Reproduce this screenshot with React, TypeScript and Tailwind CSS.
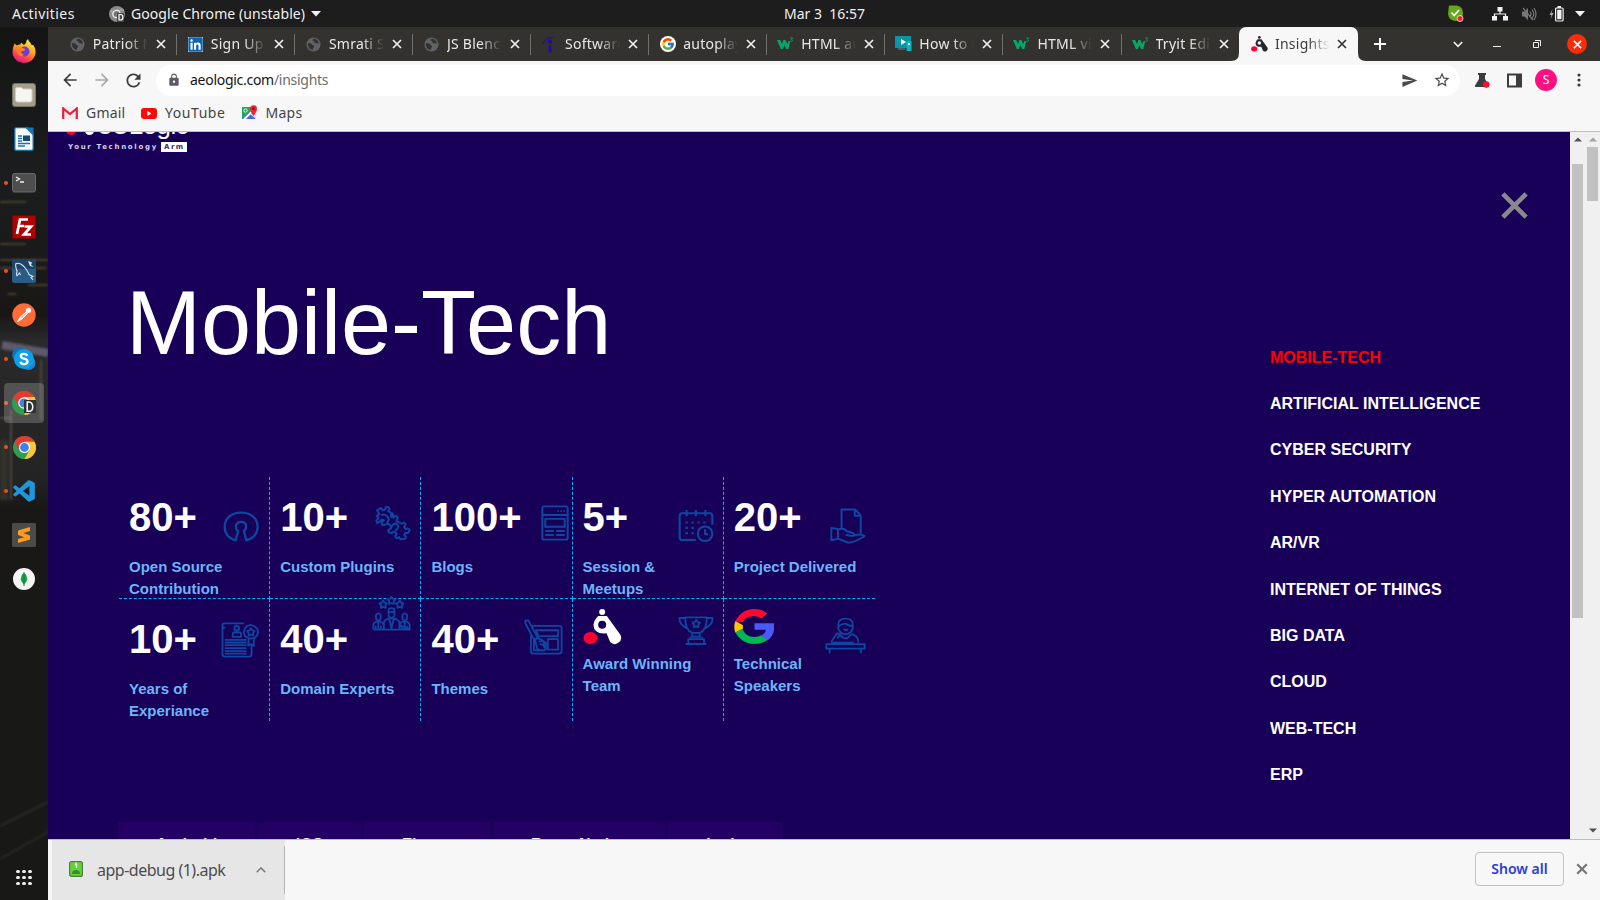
import type { ReactNode } from "react";
import { FcGoogle } from "react-icons/fc";
import { FaLinkedin } from "react-icons/fa";
import { BiLogoVisualStudio } from "react-icons/bi";
import { MdLock, MdRefresh, MdStarBorder, MdArrowBack, MdArrowForward, MdSend } from "react-icons/md";

const UI = "font-['Noto_Sans',sans-serif]";
const ARIAL = "font-['Liberation_Sans',Arial,sans-serif]";

/* ---------- shared glyphs ---------- */

function Cross({ size, color, width }: { size: number; color: string; width: number }) {
  return (
    <svg width={size} height={size} viewBox="0 0 10 10" className="shrink-0">
      <path d="M1 1L9 9M9 1L1 9" stroke={color} strokeWidth={width} />
    </svg>
  );
}

function Caret({ className }: { className?: string }) {
  return (
    <svg width="10" height="6" viewBox="0 0 10 6" className={className}>
      <path d="M0 0h10L5 5.5z" fill="#f2f2f2" />
    </svg>
  );
}

function Chrome({ size = 24 }: { size?: number }) {
  return (
    <svg width={size} height={size} viewBox="0 0 24 24">
      <circle cx="12" cy="12" r="12" fill="#2f9e4f" />
      <path d="M1.6 6A12 12 0 0 1 22.4 6L12 6L6.8 15Z" fill="#e33b2e" />
      <path d="M22.4 6A12 12 0 0 1 12 24L17.2 15L12 6Z" fill="#fcc934" />
      <circle cx="12" cy="12" r="5.8" fill="#fff" />
      <circle cx="12" cy="12" r="4.6" fill="#3f7ff0" />
    </svg>
  );
}

function Globe() {
  return (
    <svg width="15" height="15" viewBox="0 0 16 16">
      <circle cx="8" cy="8" r="7.5" fill="#5f6368" />
      <path d="M2 6.500c2 .2 4 .3 4.500 1.500.5 1 2 .8 2.200 2-.2 1.500-1.500 1.500-1.700 4-2.500-.4-5.300-3-5-7.500zM8 1.800c-1 1-1.500 2 0 2.500 1.200.4.600 1.700 2 2 1.500.3 2 1 3.800.6C13.500 4 11.500 1.700 8 1.800z" fill="#33322f" />
    </svg>
  );
}

function W3() {
  return (
    <svg width="17" height="14" viewBox="0 0 17 14">
      <path d="M0 3h3.200l1.800 4L6.400 3h2l1.900 4 1-2.700h2L11.300 12H9.300L7.300 8.300 5.800 12H3.900z" fill="#06a767" />
      <path d="M13.300 1h2.200l-1 1.500c1.300.1 1.200 1.900-.2 1.900l-1-.2" fill="none" stroke="#06a767" strokeWidth=".9" />
    </svg>
  );
}

function AeoMark({ width, height, color }: { width: number; height: number; color: string }) {
  return (
    <svg width={width} height={height} viewBox="252 416 116 108">
      <circle cx="309" cy="425" r="9" fill={color} />
      <path d="M297 437H323L364 494A19 19 0 0 1 333 515L322 489Q284 493 283 463Q284 450 297 437Z" fill={color} />
      <circle cx="309" cy="463" r="12" fill={color === "#fff" ? "#180058" : "#f7f7f7"} />
      <ellipse cx="274" cy="503" rx="21" ry="18" fill="#ff0032" />
    </svg>
  );
}

/* ---------- desktop top bar ---------- */

function TopBar() {
  return (
    <header className={`grid h-[27px] shrink-0 grid-cols-[784px_1fr] items-center bg-[#1d1d1d] text-[14px] leading-[27px] text-[#f0f0f0] ${UI}`}>
      <div className="flex items-center pl-3">
        <span className="w-[97px] tracking-[0.45px]">Activities</span>
        <svg width="16" height="16" viewBox="0 0 16 16">
          <circle cx="8" cy="8" r="8" fill="#8a8a8a" />
          <path d="M8 4h7M5 9L1.500 4" stroke="#b5b5b5" />
          <circle cx="7.500" cy="8" r="3.700" fill="#777" stroke="#eee" strokeWidth="1.300" />
          <path d="M8 7h7v9H8z" fill="#444" />
          <path d="M10 8.500v5.500h1.500c3.200 0 3.200-5.500 0-5.500z" fill="none" stroke="#fff" strokeWidth="1.200" />
        </svg>
        <span className="ml-[6px] w-[174px] whitespace-nowrap tracking-[0.07px]">Google Chrome (unstable)</span>
        <Caret className="ml-[6px]" />
      </div>
      <div className="flex items-center">
        <span className="-mt-px whitespace-pre">Mar 3  16:57</span>
        <div className="ml-auto flex items-center pr-[15px]">
          <svg width="17" height="17" viewBox="0 0 17 17" className="mr-[28px]">
            <path d="M2 .5h8q6 1 6 8 0 7-7 7.500-7 0-8-7z" fill="#65a61a" />
            <path d="M4.500 7.500l2.700 3L12 5" fill="none" stroke="#fff" strokeWidth="1.800" />
            <circle cx="13" cy="13.500" r="3" fill="#ee2233" stroke="#eee" strokeWidth=".8" />
          </svg>
          <svg width="16" height="14" viewBox="0 0 16 14" className="mr-[13px]">
            <path d="M5.500 0h5v4.500h-5zM0 9h5v4.500H0zM11 9h5v4.500h-5z" fill="#f2f2f2" />
            <path d="M8 4v3M2.500 9.500V7h11v2.500" fill="none" stroke="#f2f2f2" strokeWidth="1.200" />
          </svg>
          <svg width="16" height="14" viewBox="0 0 16 14" className="mr-[12px]">
            <path d="M1 4.500h2.500L7 1v12L3.500 9.500H1z" fill="#777" />
            <path d="M9 4.500q2 2.500 0 5M11 2.500q3.500 4.500 0 9M13 1q4 6 0 12M2 1l10 12" fill="none" stroke="#777" strokeWidth="1.200" />
          </svg>
          <svg width="15" height="16" viewBox="0 0 15 16" className="mr-[11px]">
            <path d="M3.500 3L.5 9h2L1.500 13l3-6h-2z" fill="#aaa" />
            <rect x="6.600" y="2" width="7.500" height="13" rx="1" fill="none" stroke="#f2f2f2" strokeWidth="1.200" />
            <path d="M8.200 3.700h4.300v9.600H8.200zM8.500 0h3.500v2H8.500z" fill="#f2f2f2" />
          </svg>
          <Caret />
        </div>
      </div>
    </header>
  );
}

/* ---------- dock ---------- */

type DockApp = { name: string; running?: boolean; active?: boolean; icon: ReactNode };

const dockApps: DockApp[] = [
  {
    name: "firefox",
    icon: (
      <svg width="24" height="24" viewBox="0 0 24 24">
        <defs>
          <linearGradient id="ff" gradientUnits="userSpaceOnUse" x1="19" y1="1" x2="8" y2="24">
            <stop offset="0" stopColor="#fff04a" />
            <stop offset=".45" stopColor="#ffa01f" />
            <stop offset=".75" stopColor="#ff4050" />
            <stop offset="1" stopColor="#e21587" />
          </linearGradient>
        </defs>
        <path d="M2.500 4.500L5 6.500Q6.500 5 8.500 5.500L9 3.500 12 6 14 4Q14 1.500 16 0 16.500 2.500 18.500 4L20 6.500 21 5.500Q25 11 23 16.500 20 24 12 24 3.500 23.500.8 16 0 10 2.500 4.500Z" fill="url(#ff)" />
        <circle cx="12.500" cy="12.500" r="5" fill="#6a3fd8" />
        <path d="M4 8Q8 7 11.500 9.500 14 10 12.500 11.500L9 12.500Q9 15 12 15.500 9 19 5.500 14.500Z" fill="#ff8420" />
      </svg>
    ),
  },
  {
    name: "files",
    icon: (
      <svg width="24" height="24" viewBox="0 0 24 24">
        <rect x=".5" y=".5" width="23" height="23" rx="2.500" fill="#a49d8b" stroke="#777164" />
        <path d="M3.500 6q0-1.500 1.500-1.500h4.500L11 6h7.500Q20 6 20 7.500V17q0 2-2 2H6q-2.500 0-2.500-2z" fill="#f7f5f2" stroke="#d4cec2" />
      </svg>
    ),
  },
  {
    name: "writer",
    icon: (
      <svg width="20" height="24" viewBox="0 0 20 24">
        <path d="M2 .7h11.500l5.700 6V22q0 1.300-1.300 1.300H2Q.8 23.300.8 22V2Q.8.7 2 .7z" fill="#fafafa" stroke="#0f6ba8" strokeWidth="1.300" />
        <path d="M11 .5h8.500V9z" fill="#1677b5" />
        <path d="M4 9h4M4 11.500h4M4 14h4M4 16.500h12M4 19h7" stroke="#1677b5" strokeWidth="1.300" />
        <path d="M9 8.500h7V14H9z" fill="#134b73" />
      </svg>
    ),
  },
  {
    name: "terminal",
    running: true,
    icon: (
      <svg width="24" height="20" viewBox="0 0 24 20">
        <rect x=".5" y=".5" width="23" height="18.500" rx="2" fill="#4e4e4e" stroke="#6a6a6a" />
        <path d="M4 4l3.500 2L4 8M8 9h4" fill="none" stroke="#f2f2f2" strokeWidth="1.300" />
      </svg>
    ),
  },
  {
    name: "filezilla",
    icon: (
      <svg width="24" height="24" viewBox="0 0 24 24">
        <rect x=".5" y=".5" width="23" height="23" fill="#b00000" stroke="#7c0000" strokeDasharray="1 1" />
        <path d="M5 19L8 4.500h8M6.500 11H12M12.500 11.500h6.500l-7 8h7" fill="none" stroke="#fff" strokeWidth="2.700" />
      </svg>
    ),
  },
  {
    name: "mysql",
    running: true,
    icon: (
      <svg width="24" height="24" viewBox="0 0 24 24">
        <rect width="24" height="24" rx="2.500" fill="#2a5d86" />
        <rect width="24" height="10" rx="2.500" fill="#1d4568" />
        <path d="M5 17q-1-2 0-5-2-5-1-7.500 4-1 8 3 4 5 5 8l4 2-2 1 2 2.500M5 17l2.500-3 1 2" fill="none" stroke="#dbe6ef" strokeWidth="1.100" />
        <path d="M16 2l4 1.500-1 2.500 3 2-4-1z" fill="#dbe6ef" />
      </svg>
    ),
  },
  {
    name: "postman",
    icon: (
      <svg width="24" height="24" viewBox="0 0 24 24">
        <circle cx="12" cy="12" r="11.700" fill="#ff6c37" />
        <path d="M5.500 18.500l2.500-4 6-5.500 1.500 1.500-5.500 5.500z" fill="#fff" stroke="#fff" strokeLinejoin="round" />
        <circle cx="16.500" cy="7.300" r="2.600" fill="#fff" />
        <path d="M9.500 15l5-5" stroke="#ff6c37" strokeWidth=".8" />
      </svg>
    ),
  },
  {
    name: "skype",
    running: true,
    icon: (
      <svg width="24" height="24" viewBox="0 0 24 24">
        <circle cx="7.500" cy="8" r="7.300" fill="#0a75c2" />
        <circle cx="16.500" cy="16" r="7" fill="#1b86d6" />
        <circle cx="12" cy="12" r="10" fill="#0f9fe5" />
        <path d="M15.300 8.800Q14.500 6.800 12 6.800q-3.200 0-3.200 2.300 0 2 3.200 2.600 3.500.6 3.500 2.900 0 2.600-3.500 2.600-3 0-3.600-2.300" fill="none" stroke="#fff" strokeWidth="2.300" />
      </svg>
    ),
  },
  {
    name: "chrome-dev",
    running: true,
    active: true,
    icon: (
      <svg width="24" height="24" viewBox="0 0 24 24" className="overflow-visible">
        <Chrome />
        <path d="M12 9h12v13H12z" fill="#333" />
        <path d="M15.200 11v9.300h1.800c5 0 5-9.300 0-9.300z" fill="none" stroke="#fff" strokeWidth="1.500" />
      </svg>
    ),
  },
  { name: "chrome", running: true, icon: <Chrome size={23} /> },
  { name: "vscode", running: true, icon: <BiLogoVisualStudio size={26} color="#2196dc" /> },
  {
    name: "sublime",
    icon: (
      <svg width="24" height="24" viewBox="0 0 24 24">
        <rect width="24" height="24" rx="1.500" fill="#4b4b4b" />
        <path d="M6 7.500L18 4v4L6 11.500zM6 8l12 4.500v4L6 12zM6 16l12-3.500v4L6 20z" fill="#ff9a1c" />
      </svg>
    ),
  },
  {
    name: "mongodb",
    icon: (
      <svg width="22" height="22" viewBox="0 0 22 22">
        <circle cx="11" cy="11" r="11" fill="#f4f4f4" />
        <path d="M11 4q6.500 7 0 12.500Q4.500 11 11 4z" fill="#16a34c" />
        <path d="M11 6v12" stroke="#0d7a37" />
      </svg>
    ),
  },
];

function Dock() {
  return (
    <aside className="relative flex w-[48px] shrink-0 flex-col bg-[#171717] pt-[2px]">
      <svg className="absolute left-0 top-0" width="48" height="873" viewBox="0 27 48 873">
        <defs>
          <linearGradient id="wall" x1="0" y1="0" x2="0" y2="1">
            <stop offset="0" stopColor="#141414" />
            <stop offset=".17" stopColor="#1b1d1e" />
            <stop offset=".33" stopColor="#191716" />
            <stop offset=".36" stopColor="#2a2a2b" />
            <stop offset=".52" stopColor="#242324" />
            <stop offset=".55" stopColor="#191817" />
            <stop offset="1" stopColor="#181817" />
          </linearGradient>
          <filter id="soft"><feGaussianBlur stdDeviation="1" /></filter>
        </defs>
        <rect y="27" width="48" height="873" fill="url(#wall)" />
        <g filter="url(#soft)" fill="none">
          <path d="M0 202h26M0 244h26M0 260h48M0 268h46M28 285h20M8 294h8" stroke="#5a4c36" strokeWidth="1.300" />
          <path d="M2 345L48 353" stroke="#5d5a6a" strokeWidth="8" />
          <path d="M11 410v90M41 360v60M0 418h10" stroke="#4a4540" strokeWidth="2" />
          <path d="M0 440h8v60H0z" fill="#33302a" />
          <path d="M0 826L48 802M0 859L48 832" stroke="#2c2b27" strokeWidth="2" />
        </g>
      </svg>
      {dockApps.map((app) => (
        <div key={app.name} className="relative flex h-[44px] shrink-0 items-center">
          <span className={`ml-[4px] h-1 w-[3.500px] rounded-full ${app.running ? "bg-[#e9521d]" : ""}`} />
          <div className={`-ml-[3.500px] flex h-[40px] w-[40px] items-center justify-center rounded-[4px] ${app.active ? "bg-white/20" : ""}`}>
            {app.icon}
          </div>
        </div>
      ))}
      <div className="relative mt-auto mb-[15px] ml-4 grid w-4 grid-cols-3 gap-[2.500px]">
        {Array.from({ length: 9 }, (_, i) => (
          <span key={i} className="size-[3.500px] rounded-full bg-[#ededed]" />
        ))}
      </div>
    </aside>
  );
}

/* ---------- browser chrome ---------- */

const tabs: { title: string; icon: ReactNode }[] = [
  { title: "Patriot M", icon: <Globe /> },
  { title: "Sign Up", icon: <span className="flex bg-white"><FaLinkedin size={15} color="#0a66b5" className="scale-110" /></span> },
  { title: "Smrati Sr", icon: <Globe /> },
  { title: "JS Blenc", icon: <Globe /> },
  {
    title: "Software",
    icon: (
      <svg width="16" height="17" viewBox="0 0 16 17">
        <path d="M1 8Q3 1 11 1.500" fill="none" stroke="#2209a8" strokeWidth="1" />
        <circle cx="8" cy="5.500" r="2.200" fill="#2209a8" />
        <path d="M6.600 9h2.800v7.500H6.600z" fill="#2209a8" />
      </svg>
    ),
  },
  { title: "autoplay", icon: <span className="flex size-4 items-center justify-center rounded-full bg-white"><FcGoogle size={14} /></span> },
  { title: "HTML au", icon: <W3 /> },
  {
    title: "How to m",
    icon: (
      <svg width="17" height="16" viewBox="0 0 17 16">
        <path d="M0 0h16v12H0z" fill="#0796a6" />
        <path d="M6 3l5 3-5 3z" fill="#fff" />
        <path d="M11.500 5h5v10h-5z" fill="#07b7c7" />
        <path d="M13 7h2v2h-2z" fill="#fff" />
        <path d="M3 12h7v2H3z" fill="#45606a" />
      </svg>
    ),
  },
  { title: "HTML vi", icon: <W3 /> },
  { title: "Tryit Edit", icon: <W3 /> },
];

const FADE = "[mask-image:linear-gradient(to_right,#000_60%,transparent_98%)]";

function TabStrip() {
  return (
    <div className={`flex h-[34px] shrink-0 items-stretch bg-[#33322f] pl-[10.700px] text-[14px] tracking-[0.25px] ${UI}`}>
      {tabs.map((tab, i) => (
        <div key={i} className="flex w-[118.100px] shrink-0 items-center">
          <span className="ml-[10px] flex w-[17px] shrink-0 justify-center">{tab.icon}</span>
          <span className={`-mt-[2px] ml-[7px] w-[56px] overflow-hidden whitespace-nowrap text-[#e8e8e8] ${FADE}`}>{tab.title}</span>
          <span className="ml-[7px] flex"><Cross size={10} color="#f0f0f0" width={1.7} /></span>
          <span className={`ml-auto h-[21px] w-px ${i < 9 ? "bg-[#72716f]" : ""}`} />
        </div>
      ))}
      <div className="relative -ml-[0.700px] flex w-[119px] shrink-0 items-center rounded-t-[7px] bg-[#f7f7f7]">
        <svg className="absolute -left-[8px] bottom-0" width="8" height="8"><path d="M8 0v8H0Q8 8 8 0z" fill="#f7f7f7" /></svg>
        <svg className="absolute -right-[8px] bottom-0" width="8" height="8"><path d="M0 0v8h8Q0 8 0 0z" fill="#f7f7f7" /></svg>
        <span className="ml-[12px] flex w-[17px]"><AeoMark width={17} height={16} color="#26242c" /></span>
        <span className={`-mt-[2px] ml-[7px] w-[56px] overflow-hidden whitespace-nowrap text-[#3c3c3c] ${FADE}`}>Insights</span>
        <span className="ml-[6px] flex"><Cross size={10} color="#333" width={1.7} /></span>
      </div>
      <div className="flex grow items-center pl-[16px]">
        <svg width="12" height="12" viewBox="0 0 12 12"><path d="M6 0v12M0 6h12" stroke="#f5f5f5" strokeWidth="2" /></svg>
        <div className="ml-auto flex items-center pr-[13px]">
          <svg width="10" height="7" viewBox="0 0 10 7" className="mr-[30px]"><path d="M.8 1L5 5.300 9.200 1" fill="none" stroke="#f0f0f0" strokeWidth="1.700" /></svg>
          <span className="mr-[32px] mt-[4px] h-px w-[8px] bg-[#f0f0f0]" />
          <svg width="8" height="8" viewBox="0 0 8 8" className="mr-[26px]"><path d="M2 .5h5.500V6M.5 2.500h5v5h-5z" fill="none" stroke="#f0f0f0" /></svg>
          <span className="flex size-5 items-center justify-center rounded-full bg-[#fb2c06]"><Cross size={9} color="#fff" width={1.8} /></span>
        </div>
      </div>
    </div>
  );
}

function Toolbar() {
  return (
    <div className={`flex h-[38px] shrink-0 items-center bg-[#f7f7f7] pl-[12px] text-[14px] ${UI}`}>
      <MdArrowBack size={20} color="#3c3c3c" />
      <MdArrowForward size={20} color="#aaa" className="ml-3" />
      <MdRefresh size={21} color="#3c3c3c" className="ml-[11px]" />
      <div className="ml-[12px] flex h-[31px] w-[1304px] shrink-0 items-center rounded-full bg-white pl-[11px] pr-[9px]">
        <MdLock size={14} color="#5a5d66" />
        <span className="-mt-[2px] ml-[9px] tracking-[-0.28px] text-[#6c6c6c]"><span className="text-[#141414]">aeologic.com</span>/insights</span>
        <MdSend size={17} color="#4a4a4a" className="ml-auto" />
        <MdStarBorder size={18} color="#4a4a4a" className="ml-[15px]" />
      </div>
      <svg width="16" height="16" viewBox="0 0 16 16" className="ml-[14px]">
        <path d="M4 1h8v2h-1v4l4 6.500q.5 1.500-1 1.500H2Q.5 15 1 13.500L5 7V3H4z" fill="#3c3c3c" />
        <circle cx="12.300" cy="12.500" r="3.200" fill="#ff1030" />
      </svg>
      <svg width="15" height="15" viewBox="0 0 15 15" className="ml-[17px]"><path d="M1 1.500h13v12H1z" fill="none" stroke="#3c3c3c" strokeWidth="2" /><path d="M9 1h5v13H9z" fill="#3c3c3c" /></svg>
      <span className="ml-[13px] flex size-[22px] items-center justify-center rounded-full bg-[#ff0f80] text-[12px] text-white">S</span>
      <svg width="4" height="14" viewBox="0 0 4 14" className="ml-[20px]"><g fill="#3c3c3c"><circle cx="2" cy="2" r="1.600" /><circle cx="2" cy="7" r="1.600" /><circle cx="2" cy="12" r="1.600" /></g></svg>
    </div>
  );
}

function Bookmarks() {
  return (
    <div className={`flex h-[33px] shrink-0 items-center border-b border-[#bdbdbd] bg-[#f7f7f7] pb-[4px] pl-[14px] text-[14px] text-[#444] ${UI}`}>
      <svg width="16" height="12" viewBox="0 0 16 12"><path d="M0 0h16v12H0z" fill="#eee" /><path d="M1.200 12V1.500L8 7l6.800-5.500V12" fill="none" stroke="#e0233a" strokeWidth="2.200" /></svg>
      <span className="-mt-px ml-2 w-[55px] tracking-[0.2px]">Gmail</span>
      <svg width="16" height="11" viewBox="0 0 16 11"><rect width="16" height="11" rx="3" fill="#ff0808" /><path d="M6.300 3v5l4.200-2.500z" fill="#fff" /></svg>
      <span className="-mt-px ml-2 w-[76px] tracking-[0.55px]">YouTube</span>
      <svg width="17" height="16" viewBox="0 0 17 16">
        <path d="M1 2h13v12H1z" fill="#26a65b" />
        <path d="M1 14L8 7l7 7z" fill="#4668e8" />
        <path d="M2.500 15L13 4.500" stroke="#fff" strokeWidth="2" />
        <path d="M9 9h6v5z" fill="#dfe3e6" />
        <circle cx="4.500" cy="5.500" r="1.700" fill="none" stroke="#e8f5ec" />
        <path d="M12.500 11Q9 6 9 3.700a3.500 3.500 0 0 1 7 0Q16 6 12.500 11z" fill="#ee2536" />
        <circle cx="12.500" cy="3.800" r="1.300" fill="#7b0d1a" />
      </svg>
      <span className="-mt-px ml-[7.500px] tracking-[0.25px]">Maps</span>
    </div>
  );
}

/* ---------- web page ---------- */

function Line({ box, w, h, width = 6, className, children }: { box: string; w: number; h: number; width?: number; className: string; children: ReactNode }) {
  return (
    <svg width={w} height={h} viewBox={box} className={`shrink-0 ${className}`} fill="none" stroke="#0d47a1" strokeWidth={width} strokeLinejoin="round">
      {children}
    </svg>
  );
}

const star = (x: number, y: number, r: number) =>
  Array.from({ length: 10 }, (_, i) => {
    const a = (Math.PI / 5) * i - Math.PI / 2;
    const q = i % 2 ? r * 0.6 : r;
    return `${(x + q * Math.cos(a)).toFixed(1)},${(y + q * Math.sin(a)).toFixed(1)}`;
  }).join(" ");

type Stat = { value?: string; mark?: ReactNode; label: string; icon: ReactNode };

const stats: Stat[] = [
  {
    value: "80+",
    label: "Open Source Contribution",
    icon: (
      <Line box="340 121 109 94" w={36} h={31} className="mt-[18px]" width={7}>
        <path d="M378 210C350 202 345 184 345 168C345 142 367 126 395 126S445 142 445 168C445 184 438 202 411 210L403 182Q410 178 410 168Q410 154 395 154T379 168Q379 178 386 182Z" />
      </Line>
    ),
  },
  {
    value: "10+",
    label: "Custom Plugins",
    icon: (
      <Line box="793 106 109 106" w={36} h={35} className="-mr-px mt-[13px]">
        <path d="M799 119L811 112L817 119Q826 119 825 111Q833 105 837 114L833 122L843 127L841 137Q846 144 852 137Q861 135 862 144L858 151L869 157Q873 162 881 156Q890 162 881 169L886 176Q895 171 898 180L893 188L884 188L882 195Q890 198 884 205L870 207L866 200Q858 208 854 198L859 190L850 184L842 188Q833 188 833 179L842 173L838 162L829 159Q824 166 815 163L813 154L820 149Q811 145 808 153L800 158L797 150L805 142L798 136L806 130Z" />
        <path d="M843 127Q851 130 845 139M841 173Q847 158 858 159Q868 168 860 175L854 182M811 135Q820 128 830 137Q839 147 829 159" />
      </Line>
    ),
  },
  {
    value: "100+",
    label: "Blogs",
    icon: (
      <Line box="121 103 85 109" w={28} h={36} className="-mr-[7px] mt-[12px]">
        <rect x="125" y="107" width="77" height="101" rx="5" />
        <path d="M125 133H202M134 145H193V169H134ZM134 182H160M167 182H193M134 194H160M167 194H193M171 121h4M180 121h4M189 121h4" />
      </Line>
    ),
  },
  {
    value: "5+",
    label: "Session & Meetups",
    icon: (
      <Line box="532 118 109 100" w={36} h={33} className="-mr-px mt-[16px]" width={6.5}>
        <path d="M586 212H545Q537 212 537 204V139Q537 131 545 131H628Q636 131 636 139V166M558 121V140M586 121V140M615 121V140M555 159h7M573 159h7M591 159h7M608 159h7M555 175h7M573 175h7M555 191h7M573 191h7" />
        <circle cx="614" cy="193" r="22" />
        <path d="M614 179V194H623" />
      </Line>
    ),
  },
  {
    value: "20+",
    label: "Project Delivered",
    icon: (
      <Line box="988 115 109 108" w={36} h={36} className="-mr-px mt-[15px]">
        <path d="M1023 174V119H1064L1081 137V192M1063 119V138H1081M992 175L1012 178V208L992 212ZM1012 181Q1028 173 1038 184L1057 190Q1066 196 1055 199L1036 196M1012 207L1042 219Q1056 222 1093 200Q1083 190 1058 199" />
      </Line>
    ),
  },
  {
    value: "10+",
    label: "Years of Experiance",
    icon: (
      <Line box="331 454 117 109" w={39} h={36} className="-mr-px mt-[7px]" width={5.5}>
        <path d="M400 458H340Q335 458 335 463V552Q335 559 342 559H416Q423 559 423 551V524M335 471H344M342 508H408M342 516H408M342 524H408M342 533H408M342 542H408M342 550H408M414 505L413 526L421 521L430 526V504" />
        <circle cx="378" cy="473" r="7" />
        <path d="M366 499V492Q366 485 373 485H385Q391 485 391 492V499Z" />
        <path d="M410 466L422 463L431 467L440 474L443 484L439 496L429 503L416 504L404 498L399 486L403 473Z" />
        <polygon points={star(421, 485, 12)} />
      </Line>
    ),
  },
  {
    value: "40+",
    label: "Domain Experts",
    icon: (
      <Line box="784 376 118 109" w={39} h={36} className="-mt-[20px] mr-[-1px]" width={5.5}>
        <polygon points={star(843, 393, 12)} />
        <polygon points={star(818, 405, 12)} />
        <polygon points={star(868, 405, 12)} />
        <path d="M788 481V466Q790 457 803 455Q816 457 819 466M867 466Q870 457 883 455Q896 457 898 466V481ZM788 481H898M820 481V459Q823 448 843 446Q863 448 867 459V481M795 481V469M811 481V468M875 481V469M891 481V469M836 448L843 477L850 448M803 458V480M883 458V480" />
        <path d="M834 423Q834 416 843 416T852 423V438Q850 445 843 445T834 438ZM834 430Q844 424 852 430M796 436Q803 427 810 436V448Q803 458 796 448ZM876 436Q883 427 890 436V448Q883 458 876 448Z" />
      </Line>
    ),
  },
  {
    value: "40+",
    label: "Themes",
    icon: (
      <Line box="70 445 118 109" w={39} h={36} className="-mr-px mt-[4px]" width={5.5}>
        <path d="M91 490V543Q91 550 98 550H177Q184 550 184 543V473Q184 466 177 466H91M106 479H173V497H114ZM142 506H173V538H142ZM74 450L83 449L111 501L104 508L96 500L74 458ZM104 508Q107 528 111 536Q122 545 136 537V518Q124 505 111 503M100 506V540H135M114 513H130V530M118 521Q130 520 133 534" />
      </Line>
    ),
  },
  {
    mark: <AeoMark width={39} height={36} color="#fff" />,
    label: "Award Winning Team",
    icon: (
      <Line box="532 438 109 88" w={36} h={29} className="-mr-px mt-[7px]" width={5.5}>
        <path d="M554 442H619Q620 481 598 489V501H575V489Q553 481 554 442ZM555 444H536Q536 466 563 477M618 444H637Q637 466 610 477M575 489H598M563 508H611V523H563ZM555 523H618M570 507V501M604 507V501" />
        <polygon points={star(587, 462, 12)} />
      </Line>
    ),
  },
  {
    mark: (
      <svg width="40" height="35" viewBox="3 3 42 42" preserveAspectRatio="none">
        <path fill="#ff0a2f" d="M4.500 18C8 9 15 3 24 3c6 0 10 2 14 5.500l-6 6C26 9 16 11 12 19z" />
        <path fill="#ffc400" d="M4.500 17.500a21 21 0 0 0 0 14l8-5a12 12 0 0 1 0-4z" />
        <path fill="#00b84f" d="M4.500 31C8 39 15 45 24 45c6 0 11-2 14.500-5l-7-5.500C25 38.500 15 37 12 27z" />
        <path fill="#4b5af5" d="M24.500 20H45c1 9-1 16-6.500 20.500l-7-5.500c3-2 4.500-4 5-7H24.500z" />
      </svg>
    ),
    label: "Technical Speakers",
    icon: (
      <Line box="973 438 124 112" w={41} h={37} className="-mr-px mt-[8px]" width={5.5}>
        <path d="M977 520H1093V534H977ZM987 535V548M1082 535V548M1009 514Q990 520 994 510L1009 488L1020 490M1052 490Q1073 492 1074 516M1013 460Q1013 443 1035 443T1057 460V473Q1050 490 1035 490T1013 473ZM1014 466Q1026 458 1035 458Q1047 465 1056 466M1028 475Q1035 480 1043 475M1018 491Q1034 514 1052 491M1006 516H1060M1010 502L1020 490" />
      </Line>
    ),
  },
];

function StatsGrid() {
  return (
    <section className="ml-[71px] grid h-[244px] w-[756px] shrink-0 grid-cols-5 grid-rows-2">
      {stats.map((s, i) => (
        <div
          key={i}
          className={`flex flex-col border-dashed border-[#00b4ff] px-[10px] ${s.mark ? "pt-[10px]" : "pt-[16px]"} ${i % 5 < 4 ? "border-r" : ""} ${i < 5 ? "border-b" : ""}`}
        >
          <div className={`flex shrink-0 items-start justify-between ${s.mark ? "h-[36px]" : "h-[48px]"}`}>
            {s.mark ?? <span className="text-[40px] font-bold leading-[48px] text-white">{s.value}</span>}
            {s.icon}
          </div>
          <span className={`text-[15px] font-bold leading-[22px] text-[#6bb5f8] ${s.mark ? "mt-[8px]" : "mt-[15px]"}`}>{s.label}</span>
        </div>
      ))}
    </section>
  );
}

const topics = ["MOBILE-TECH", "ARTIFICIAL INTELLIGENCE", "CYBER SECURITY", "HYPER AUTOMATION", "AR/VR", "INTERNET OF THINGS", "BIG DATA", "CLOUD", "WEB-TECH", "ERP"];

function WebPage() {
  return (
    <main className={`flex min-w-0 grow overflow-hidden bg-[#180058] ${ARIAL}`}>
      <div className="flex w-[1222px] shrink-0 flex-col">
        <div className="h-[22px] w-[160px] shrink-0 pl-[16px]">
          <div className="-mt-[20px] flex h-[30px] items-end pl-0.5 text-white">
            <span className="mb-[7px] mr-[9px] size-[10px] shrink-0 rounded-full bg-[#ff0032]" />
            <span className="mb-[7px] mr-[3px] size-[9px] shrink-0 rounded-full bg-white" />
            <span className="mb-[2px] text-[28px] font-bold leading-[30px] tracking-[-0.5px]">eo</span>
            <span className="mb-[2px] text-[26px] leading-[30px] tracking-[-0.5px]">Logic</span>
          </div>
          <div className="flex h-[10px] items-center pl-[4px] font-['DejaVu_Sans',sans-serif] text-[7px] font-bold leading-[10px] text-[#d8d2ea]">
            <span className="w-[93px] whitespace-nowrap tracking-[1.700px]">Your Technology</span>
            <span className="w-[26px] shrink-0 bg-white pl-[3px] tracking-[1.500px] text-[#3b2870]">Arm</span>
          </div>
        </div>
        <h1 className="ml-[78px] mt-[119px] h-[100px] shrink-0 text-[90px] leading-[100px] text-white">Mobile-Tech</h1>
        <div className="h-[104px] shrink-0" />
        <StatsGrid />
        <div className="ml-[70px] mt-[101px] flex shrink-0 gap-[3px] text-center text-[16px] font-bold leading-[20px] text-white">
          <span className="h-[45px] w-[137px] bg-[#240064] pt-[13px]">Android</span>
          <span className="h-[45px] w-[103px] bg-[#240064] pt-[13px]">iOS</span>
          <span className="h-[45px] w-[126px] bg-[#240064] pt-[13px]">Flutter</span>
          <span className="h-[45px] w-[172px] bg-[#240064] pt-[13px]">React Native</span>
          <span className="h-[45px] w-[114px] bg-[#240064] pt-[13px]">Ionic</span>
        </div>
      </div>
      <div className="flex grow flex-col">
        <div className="mr-[41px] mt-[59px] flex justify-end">
          <Cross size={29} color="#8a8790" width={1.6} />
        </div>
        <nav className="mt-[114.800px] flex flex-col text-[16px] font-bold text-white">
          {topics.map((t, i) => (
            <a key={t} className={`h-[46.350px] leading-[46.350px] ${i === 0 ? "text-[#ff0000]" : ""}`}>{t}</a>
          ))}
        </nav>
      </div>
    </main>
  );
}

function Arrow({ up, color }: { up?: boolean; color: string }) {
  return (
    <svg width="8" height="5" viewBox="0 0 8 5">
      <path d={up ? "M0 4.500L4 .5 8 4.500z" : "M0 .5h8L4 4.500z"} fill={color} />
    </svg>
  );
}

function Scrollbars() {
  return (
    <div className="flex w-[30px] shrink-0 bg-[#f0f0f0]">
      <div className="flex w-[15px] flex-col items-center pt-[5px]">
        <Arrow up color="#505050" />
        <span className="mt-[22px] h-[454px] w-[11px] bg-[#c1c1c1]" />
      </div>
      <div className="flex w-[15px] flex-col items-center pt-[5px]">
        <Arrow up color="#a3a3a3" />
        <span className="mt-[5px] h-[54px] w-[11px] bg-[#c1c1c1]" />
        <span className="mb-[6px] mt-auto flex"><Arrow color="#505050" /></span>
      </div>
    </div>
  );
}

function DownloadBar() {
  return (
    <footer className={`flex h-[61px] shrink-0 items-center border-t border-[#bdbdbd] bg-[#f7f7f7] pl-[4px] ${UI}`}>
      <div className="flex h-[60px] w-[233px] items-center bg-[#e6e6e6] pl-[17px]">
        <svg width="14" height="16" viewBox="0 0 14 16" className="-mt-[2px]">
          <rect x=".6" y=".6" width="12.800" height="14.800" rx="2" fill="#62d33c" stroke="#4d7d40" strokeWidth="1.200" />
          <path d="M7 1.500v1M6 3.500h1.500v3.500" stroke="#fff" strokeWidth="1.300" fill="none" />
          <path d="M3 13q0-4 4-4t4 4z" fill="#3c8a2c" />
        </svg>
        <span className="-mt-px ml-[14px] w-[129px] whitespace-nowrap text-[16px] tracking-[-0.5px] text-[#4c4c4c]">app-debug (1).apk</span>
        <svg width="10" height="6" viewBox="0 0 10 6" className="ml-[30px]"><path d="M.7 5.300L5 1l4.300 4.300" fill="none" stroke="#777" strokeWidth="1.500" /></svg>
        <span className="ml-auto h-[48px] w-px bg-[#b5b5b5]" />
      </div>
      <button className="-mt-[2px] ml-auto h-[34px] w-[89px] rounded-[4px] border border-[#c2c2c2] pb-px text-[14px] font-semibold text-[#2b3bd6]">Show all</button>
      <span className="-mt-[2px] ml-[12px] mr-[12px] flex"><Cross size={12} color="#777" width={1.9} /></span>
    </footer>
  );
}

export default function App() {
  return (
    <div className="flex h-[900px] w-[1600px] flex-col overflow-hidden bg-black">
      <TopBar />
      <div className="flex min-h-0 grow">
        <Dock />
        <div className="flex min-w-0 grow flex-col">
          <TabStrip />
          <Toolbar />
          <Bookmarks />
          <div className="flex min-h-0 grow">
            <WebPage />
            <Scrollbars />
          </div>
          <DownloadBar />
        </div>
      </div>
    </div>
  );
}
